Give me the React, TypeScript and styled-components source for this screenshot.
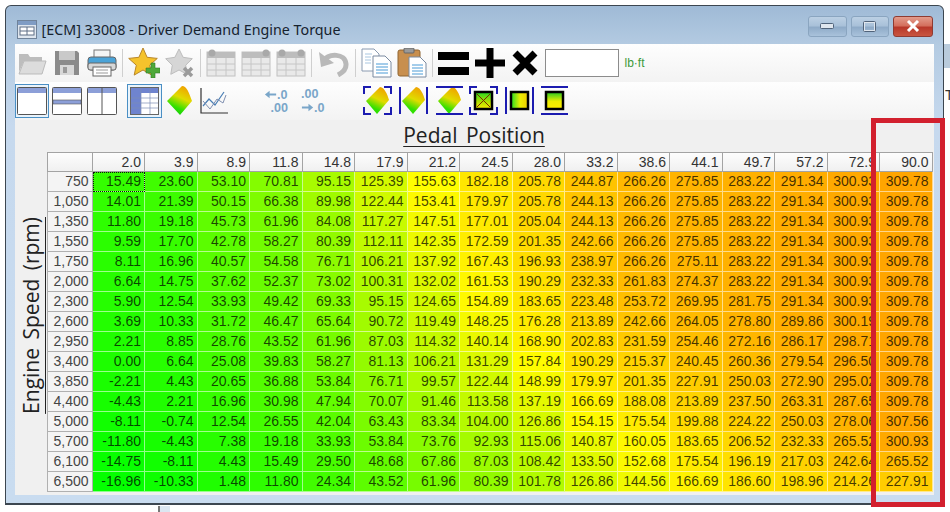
import { useId } from "react";
import styled, { createGlobalStyle } from "styled-components";

const GlobalStyle = createGlobalStyle`
  html, body {
    margin: 0;
    padding: 0;
    background: #fff;
  }
  #root {
    width: 950px;
    height: 512px;
    position: relative;
    overflow: hidden;
  }
`;

const Desktop = styled.div`
  width: 950px;
  height: 512px;
  padding: 5px 0 0 5px;
  box-sizing: border-box;
  background: #fff;
  position: relative;
  overflow: hidden;
`;

const BehindRight = styled.div`
  position: absolute;
  left: 944px;
  top: 44px;
  width: 6px;
  height: 24px;
  background: #b9cbdc;
`;

const BehindLetter = styled.div`
  position: absolute;
  left: 945px;
  top: 87px;
  font: 14px "Liberation Sans", sans-serif;
  color: #333;
`;

const BehindTab = styled.div`
  position: absolute;
  left: 158px;
  top: 506px;
  width: 12px;
  height: 6px;
  background: #dbe6f1;
  border-left: 2px solid #777;
  box-sizing: border-box;
`;

const Window = styled.div`
  width: 939px;
  height: 500px;
  box-sizing: border-box;
  border: 1.5px solid #3c4650;
  border-bottom-width: 2px;
  border-radius: 6px 6px 0 0;
  background: linear-gradient(180deg, #9fbad6 0, #b4cbe2 40px, #c6d9ee 120px, #c9dcf0 100%);
  display: flex;
  flex-direction: column;
  padding: 0 9.5px 8px 8.5px;
`;

const TitleBar = styled.div`
  height: 37.5px;
  flex: none;
  display: flex;
  align-items: center;
  padding: 10px 0 0 2px;
  box-sizing: border-box;
`;

const TitleText = styled.span`
  margin-left: 5px;
  font: 14.3px "Noto Sans", sans-serif;
  color: #16222e;
  white-space: nowrap;
`;

const Caption = styled.div`
  margin-left: auto;
  display: flex;
  gap: 4px;
  margin-top: -7px;
  margin-right: 1px;
`;

const CaptionButton = styled.div<{ $close?: boolean; $w: number }>`
  width: ${(p) => p.$w}px;
  height: 21px;
  box-sizing: border-box;
  border: 1px solid ${(p) => (p.$close ? "#8f3b32" : "#8aa5c0")};
  border-radius: 3px;
  display: flex;
  align-items: center;
  justify-content: center;
  background: ${(p) =>
    p.$close
      ? "linear-gradient(180deg, #e39c8d 0, #d4705e 45%, #b8382a 55%, #c9553f 100%)"
      : "linear-gradient(180deg, #bcd0e4 0, #a9c1d9 45%, #8fabc8 55%, #a9c2db 100%)"};
`;

const Client = styled.div`
  flex: 1;
  min-height: 0;
  background: #f0f0f0;
  display: flex;
  flex-direction: column;
`;

const ToolRow = styled.div<{ $h: number }>`
  height: ${(p) => p.$h}px;
  flex: none;
  display: flex;
  align-items: center;
  background: linear-gradient(180deg, #fefefe 0, #f3f3f3 100%);
`;

const Tool = styled.div<{ $w: number; $ml?: number; $on?: boolean }>`
  width: ${(p) => p.$w}px;
  height: ${(p) => (p.$on ? "34px" : "30px")};
  margin-left: ${(p) => p.$ml ?? 0}px;
  flex: none;
  box-sizing: border-box;
  display: flex;
  align-items: center;
  justify-content: center;
  border: ${(p) => (p.$on ? "1px solid #4a8fc4" : "none")};
  background: ${(p) => (p.$on ? "#e9f3fb" : "transparent")};
`;

const Sep = styled.div<{ $ml: number }>`
  width: 1px;
  height: 28px;
  margin-left: ${(p) => p.$ml}px;
  flex: none;
  background: #cfcfcf;
`;

const ValueInput = styled.div`
  width: 74px;
  height: 28px;
  margin-left: 5px;
  flex: none;
  box-sizing: border-box;
  background: #fff;
  border: 1px solid #8c8c8c;
`;

const Units = styled.span`
  margin-left: 6px;
  font: 12px "Liberation Sans", sans-serif;
  color: #3c9a3c;
`;

const AxisTitle = styled.div`
  height: 32px;
  flex: none;
  text-align: center;
  font: 21px "Open Sans", sans-serif;
  color: #222;
  text-decoration: underline;
  text-underline-offset: 3px;
  text-decoration-thickness: 1px;
  word-spacing: 3px;
  line-height: 30px;
  padding-right: 0;
`;

const TableArea = styled.div`
  flex: 1;
  min-height: 0;
  display: flex;
`;

const SideLabel = styled.div`
  width: 32px;
  flex: none;
  box-sizing: border-box;
  display: flex;
  align-items: flex-end;
  justify-content: center;
  padding-bottom: 81px;
`;

const SideText = styled.span`
  writing-mode: vertical-rl;
  transform: rotate(180deg);
  font: 21px "Open Sans", sans-serif;
  color: #222;
  white-space: nowrap;
  text-decoration: underline;
  text-underline-offset: 3px;
  text-decoration-thickness: 1px;
  word-spacing: 3px;
`;

const Grid = styled.div`
  width: 886px;
  display: grid;
  grid-template-columns: 46px repeat(16, 52.5px);
  grid-auto-rows: 20px;
  font: 14px "Liberation Sans", sans-serif;
`;

const HeadCell = styled.div`
  box-sizing: border-box;
  border: 1px solid #a3a3a3;
  border-left-width: 0;
  background: linear-gradient(180deg, #fdfdfd 0, #f0f0f0 100%);
  color: #333;
  text-align: right;
  padding-right: 3px;
  line-height: 19px;
`;

const RowHead = styled.div`
  box-sizing: border-box;
  border: 1px solid #b0b0b0;
  border-top-width: 0;
  background: #f4f4f4;
  color: #444;
  text-align: right;
  padding-right: 3px;
  line-height: 19px;
`;

const Cell = styled.div<{ $active?: boolean }>`
  box-sizing: border-box;
  border-right: 1px solid rgba(255, 255, 255, 0.55);
  border-bottom: 1px solid rgba(255, 255, 255, 0.55);
  outline: ${(p) => (p.$active ? "1px dotted #111" : "none")};
  outline-offset: -1px;
  color: rgba(0, 0, 0, 0.74);
  text-align: right;
  padding-right: 3px;
  line-height: 19px;
`;

const RedBox = styled.div`
  position: absolute;
  left: 871px;
  top: 118px;
  width: 74px;
  height: 389px;
  box-sizing: border-box;
  border: 5.5px solid #d2202e;
`;

const pedal = ["2.0", "3.9", "8.9", "11.8", "14.8", "17.9", "21.2", "24.5", "28.0", "33.2", "38.6", "44.1", "49.7", "57.2", "72.9", "90.0"];

const rows: [string, number[]][] = [
  ["750", [15.49, 23.6, 53.1, 70.81, 95.15, 125.39, 155.63, 182.18, 205.78, 244.87, 266.26, 275.85, 283.22, 291.34, 300.93, 309.78]],
  ["1,050", [14.01, 21.39, 50.15, 66.38, 89.98, 122.44, 153.41, 179.97, 205.78, 244.13, 266.26, 275.85, 283.22, 291.34, 300.93, 309.78]],
  ["1,350", [11.8, 19.18, 45.73, 61.96, 84.08, 117.27, 147.51, 177.01, 205.04, 244.13, 266.26, 275.85, 283.22, 291.34, 300.93, 309.78]],
  ["1,550", [9.59, 17.7, 42.78, 58.27, 80.39, 112.11, 142.35, 172.59, 201.35, 242.66, 266.26, 275.85, 283.22, 291.34, 300.93, 309.78]],
  ["1,750", [8.11, 16.96, 40.57, 54.58, 76.71, 106.21, 137.92, 167.43, 196.93, 238.97, 266.26, 275.11, 283.22, 291.34, 300.93, 309.78]],
  ["2,000", [6.64, 14.75, 37.62, 52.37, 73.02, 100.31, 132.02, 161.53, 190.29, 232.33, 261.83, 274.37, 283.22, 291.34, 300.93, 309.78]],
  ["2,300", [5.9, 12.54, 33.93, 49.42, 69.33, 95.15, 124.65, 154.89, 183.65, 223.48, 253.72, 269.95, 281.75, 291.34, 300.93, 309.78]],
  ["2,600", [3.69, 10.33, 31.72, 46.47, 65.64, 90.72, 119.49, 148.25, 176.28, 213.89, 242.66, 264.05, 278.8, 289.86, 300.19, 309.78]],
  ["2,950", [2.21, 8.85, 28.76, 43.52, 61.96, 87.03, 114.32, 140.14, 168.9, 202.83, 231.59, 254.46, 272.16, 286.17, 298.71, 309.78]],
  ["3,400", [0, 6.64, 25.08, 39.83, 58.27, 81.13, 106.21, 131.29, 157.84, 190.29, 215.37, 240.45, 260.36, 279.54, 296.5, 309.78]],
  ["3,850", [-2.21, 4.43, 20.65, 36.88, 53.84, 76.71, 99.57, 122.44, 148.99, 179.97, 201.35, 227.91, 250.03, 272.9, 295.02, 309.78]],
  ["4,400", [-4.43, 2.21, 16.96, 30.98, 47.94, 70.07, 91.46, 113.58, 137.19, 166.69, 188.08, 213.89, 237.5, 263.31, 287.65, 309.78]],
  ["5,000", [-8.11, -0.74, 12.54, 26.55, 42.04, 63.43, 83.34, 104, 126.86, 154.15, 175.54, 199.88, 224.22, 250.03, 278.06, 307.56]],
  ["5,700", [-11.8, -4.43, 7.38, 19.18, 33.93, 53.84, 73.76, 92.93, 115.06, 140.87, 160.05, 183.65, 206.52, 232.33, 265.52, 300.93]],
  ["6,100", [-14.75, -8.11, 4.43, 15.49, 29.5, 48.68, 67.86, 87.03, 108.42, 133.5, 152.68, 175.54, 196.19, 217.03, 242.64, 265.52]],
  ["6,500", [-16.96, -10.33, 1.48, 11.8, 24.34, 43.52, 61.96, 80.39, 101.78, 126.86, 144.56, 166.69, 186.6, 198.96, 214.26, 227.91]],
];

// green -> yellow at 155, then yellow -> orange at the top of the map
const heat = (v: number) => {
  if (v <= 155) {
    const r = Math.max(0, Math.round(((v + 20) / 175) * 255));
    return `rgb(${r},${255 - Math.round(r / 40)},0)`;
  }
  const t = Math.min(1, (v - 155) / 155);
  return `rgb(255,${Math.round(255 - 90 * Math.pow(t, 0.75))},0)`;
};

const fmt = (v: number) => v.toFixed(2);

const star = (cx: number, cy: number, R: number, r: number) =>
  Array.from({ length: 10 }, (_, i) => {
    const a = (Math.PI / 5) * i - Math.PI / 2;
    const d = i % 2 ? r : R;
    return `${(cx + d * Math.cos(a)).toFixed(1)},${(cy + d * Math.sin(a)).toFixed(1)}`;
  }).join(" ");

const Folder = () => (
  <svg width="30" height="26" viewBox="0 0 30 26">
    <path d="M2 4h9l2 3h12v4H7L2 22z" fill="#bdbdbd" />
    <path d="M7 11h22l-4 13H2z" fill="#dcdcdc" stroke="#bbb" />
  </svg>
);

const Floppy = () => (
  <svg width="26" height="26" viewBox="0 0 26 26">
    <path d="M1 1h22l2 2v22H1z" fill="#8b8b8b" />
    <rect x="5" y="1" width="16" height="9" fill="#c9c9c9" />
    <rect x="6" y="15" width="14" height="10" fill="#d8d8d8" />
    <rect x="9" y="17" width="4" height="6" fill="#9a9a9a" />
  </svg>
);

const Printer = () => (
  <svg width="30" height="28" viewBox="0 0 30 28">
    <rect x="7" y="1" width="16" height="9" fill="#f4f4f4" stroke="#777" />
    <rect x="1" y="8" width="28" height="13" rx="3" fill="#4aa3d8" stroke="#666" />
    <rect x="1" y="14" width="28" height="7" rx="2" fill="#d7d7d7" stroke="#666" />
    <rect x="6" y="18" width="18" height="9" fill="#fff" stroke="#666" />
    <path d="M9 21h12M9 24h12" stroke="#999" />
  </svg>
);

const StarAdd = () => (
  <svg width="32" height="30" viewBox="0 0 32 30">
    <polygon points={star(15, 15, 15, 7)} fill="#f5c32c" stroke="#b8862a" strokeLinejoin="round" />
    <path d="M23 15v5h-5v5h5v5h4v-5h5v-5h-5v-5z" fill="#4ea93a" stroke="#2f7d2a" strokeWidth="0.6" />
  </svg>
);

const StarOff = () => (
  <svg width="30" height="30" viewBox="0 0 30 30">
    <polygon points={star(14, 15, 14, 7)} fill="#d6d6d6" stroke="#bdbdbd" strokeLinejoin="round" />
    <path d="M19 20l8 8M27 20l-8 8" stroke="#9b9b9b" strokeWidth="3.5" />
  </svg>
);

const GridOff = ({ gears }: { gears: "l" | "r" | "both" }) => (
  <svg width="30" height="28" viewBox="0 0 30 28">
    <rect x="1" y="3" width="28" height="24" fill="#e9e9e9" stroke="#c0c0c0" />
    <rect x="1" y="3" width="28" height="6" fill="#bdbdbd" />
    <path d="M10 9v18M20 9v18M1 15h28M1 21h28" stroke="#c6c6c6" />
    {gears !== "r" && <circle cx="6" cy="4" r="3.5" fill="#a9a9a9" />}
    {gears !== "l" && <circle cx="25" cy="4" r="3.5" fill="#a9a9a9" />}
  </svg>
);

const Undo = () => (
  <svg width="31" height="28" viewBox="0 0 31 28">
    <path d="M5 12c6-8 22-8 23 3 .5 6-4 9-8 11" fill="none" stroke="#b9b9b9" strokeWidth="5" />
    <path d="M1 3l2 15 13-4z" fill="#b9b9b9" />
  </svg>
);

const Copy = () => (
  <svg width="31" height="30" viewBox="0 0 31 30">
    <path d="M1 1h12l5 5v17H1z" fill="#fff" stroke="#8a9ab0" />
    <path d="M12 8h12l6 6v15H12z" fill="#fff" stroke="#7a8aa0" />
    <path d="M15 16h12M15 19h12M15 22h12M15 25h12" stroke="#4a9bd6" />
    <path d="M4 6h7M4 9h6M4 12h6M4 15h6" stroke="#a9c6e0" />
  </svg>
);

const Paste = () => (
  <svg width="30" height="30" viewBox="0 0 30 30">
    <rect x="1" y="2" width="22" height="26" rx="2" fill="#c88f4e" stroke="#8f6530" />
    <rect x="7" y="0" width="10" height="5" rx="1" fill="#9a9a9a" stroke="#666" />
    <path d="M12 9h11l6 6v14H12z" fill="#fff" stroke="#7a8aa0" />
    <path d="M15 17h11M15 20h11M15 23h11M15 26h11" stroke="#4a9bd6" />
  </svg>
);

const Equals = () => (
  <svg width="32" height="26" viewBox="0 0 32 26">
    <rect x="0" y="2" width="31" height="8" fill="#000" />
    <rect x="0" y="17" width="31" height="8" fill="#000" />
  </svg>
);

const Plus = () => (
  <svg width="30" height="30" viewBox="0 0 30 30">
    <path d="M11.5 0h7v11.5H30v7H18.500V30h-7V18.500H0v-7h11.500z" fill="#000" />
  </svg>
);

const Times = () => (
  <svg width="26" height="26" viewBox="0 0 26 26">
    <path d="M3 3l20 20M23 3L3 23" stroke="#000" strokeWidth="7" />
  </svg>
);

const Pane = ({ kind }: { kind: "single" | "rows" | "cols" }) => (
  <svg width="30" height="28" viewBox="0 0 30 28">
    <rect x="0.500" y="0.500" width="29" height="27" rx="1" fill="#fff" stroke="#555" />
    <rect x="1" y="1" width="28" height="5" fill="#8c9fd8" />
    {kind === "rows" && <rect x="1" y="13" width="28" height="4" fill="#8c9fd8" stroke="#555" strokeWidth="0.600" />}
    {kind === "cols" && <path d="M15 1v26" stroke="#555" />}
  </svg>
);

const TableIcon = () => (
  <svg width="29" height="28" viewBox="0 0 29 28">
    <rect x="0.500" y="0.500" width="28" height="27" fill="#fff" stroke="#666" />
    <rect x="1" y="1" width="27" height="5" fill="#6f84cf" />
    <rect x="1" y="1" width="10" height="26" fill="#6f84cf" />
    <path d="M1 11h27M1 16h27M1 21h27M11 1v26M20 1v26" stroke="#7d8db5" strokeWidth="0.700" />
  </svg>
);

const Surface = ({ w = 26, h = 29 }: { w?: number; h?: number }) => {
  const id = useId();
  return (
    <svg width={w} height={h} viewBox="0 0 26 29">
      <defs>
        <linearGradient id={id} x1="0.700" y1="0" x2="0.300" y2="1">
          <stop offset="0" stopColor="#f0a000" />
          <stop offset="0.400" stopColor="#e0dc00" />
          <stop offset="0.750" stopColor="#30e000" />
          <stop offset="1" stopColor="#10c810" />
        </linearGradient>
      </defs>
      <path d="M15 0c5 0 7 7 10 15L13 29 0 15z" fill={`url(#${id})`} />
    </svg>
  );
};

const Chart = () => (
  <svg width="28" height="28" viewBox="0 0 28 28">
    <path d="M1 1v25h27" fill="none" stroke="#333" strokeWidth="1.200" />
    <path d="M3 19l6-7 6 6 9-13" fill="none" stroke="#4a7fb5" strokeWidth="1.200" />
    <path d="M3 14l7 8 7-10 6 4 3-8" fill="none" stroke="#7f8fb0" strokeWidth="1" />
  </svg>
);

const DecimalLabel = styled.text`
  font: bold 13.500px "Liberation Sans", sans-serif;
  fill: #7aa6c9;
`;

const Decimals = ({ more }: { more?: boolean }) => (
  <svg width="30" height="30" viewBox="0 0 30 30">
    {more ? (
      <>
        <DecimalLabel x="0" y="12">.00</DecimalLabel>
        <polygon points="1,21 8,21 8,18 13,22 8,26 8,23 1,23" fill="#7aa6c9" />
        <DecimalLabel x="14" y="27">.0</DecimalLabel>
      </>
    ) : (
      <>
        <polygon points="13,7 6,7 6,4 1,8 6,12 6,9 13,9" fill="#7aa6c9" />
        <DecimalLabel x="14" y="13">.0</DecimalLabel>
        <DecimalLabel x="7" y="27">.00</DecimalLabel>
      </>
    )}
  </svg>
);

type Frame = "corners" | "sides" | "bars";

const Marks = ({ frame }: { frame: Frame }) => {
  const c = "#1c1cb0";
  if (frame === "corners")
    return (
      <path
        d="M1 8V1h7M21 1h7v7M28 21v7h-7M8 28H1v-7"
        fill="none"
        stroke={c}
        strokeWidth="2"
      />
    );
  if (frame === "sides")
    return <path d="M1 1v27M28 1v27" fill="none" stroke={c} strokeWidth="2" />;
  return <path d="M1 1h27M1 28h27" fill="none" stroke={c} strokeWidth="2" />;
};

const SurfaceFit = ({ frame }: { frame: Frame }) => {
  const id = useId();
  return (
    <svg width="29" height="29" viewBox="0 0 29 29">
      <defs>
        <linearGradient id={id} x1="0.700" y1="0" x2="0.300" y2="1">
          <stop offset="0" stopColor="#f0a000" />
          <stop offset="0.450" stopColor="#e0dc00" />
          <stop offset="0.800" stopColor="#30e000" />
        </linearGradient>
      </defs>
      <path d="M17 1c5 1 7 7 9 13L14 28 3 15z" fill={`url(#${id})`} />
      <Marks frame={frame} />
    </svg>
  );
};

const BoxFit = ({ frame, dir }: { frame: Frame; dir: "x" | "y" | "cross" }) => {
  const id = useId();
  return (
    <svg width="29" height="29" viewBox="0 0 29 29">
      <defs>
        <linearGradient id={id} x1="0" y1="0" x2={dir === "x" ? "1" : "0"} y2={dir === "x" ? "0" : "1"}>
          <stop offset="0" stopColor={dir === "y" ? "#22c822" : "#22dd22"} />
          <stop offset="0.550" stopColor={dir === "cross" ? "#aadd00" : "#eeee00"} />
          <stop offset="1" stopColor={dir === "x" ? "#eecc00" : "#ffee00"} />
        </linearGradient>
      </defs>
      <rect x="6" y="6" width="17" height="17" fill={`url(#${id})`} stroke="#000" strokeWidth="2.500" />
      {dir === "cross" && <path d="M8 8l13 13M21 8L8 21" stroke="#7a2a00" strokeWidth="1" />}
      <Marks frame={frame} />
    </svg>
  );
};

const WinGlyph = () => (
  <svg width="20" height="19" viewBox="0 0 20 19">
    <rect x="0.500" y="0.500" width="19" height="18" fill="#dfe6ee" stroke="#70839a" />
    <rect x="1" y="1" width="18" height="4" fill="#7f9cc4" />
    <rect x="3" y="7" width="14" height="8" fill="#fff" stroke="#5e6f86" />
    <path d="M10 7v8M3 11h14" stroke="#5e6f86" />
  </svg>
);

export default function App() {
  return (
    <Desktop>
      <GlobalStyle />
      <BehindRight />
      <BehindLetter>T</BehindLetter>
      <BehindTab />
      <Window>
        <TitleBar>
          <WinGlyph />
          <TitleText>[ECM] 33008 - Driver Demand Engine Torque</TitleText>
          <Caption>
            <CaptionButton $w={39}>
              <svg width="14" height="6" viewBox="0 0 14 6">
                <rect x="0.500" y="0.500" width="13" height="5" rx="1" fill="#dfe6ee" stroke="#50637a" />
              </svg>
            </CaptionButton>
            <CaptionButton $w={38}>
              <svg width="13" height="11" viewBox="0 0 13 11">
                <rect x="1" y="1" width="11" height="9" rx="1" fill="none" stroke="#dfe6ee" strokeWidth="2" />
                <rect x="0.500" y="0.500" width="12" height="10" rx="1" fill="none" stroke="#50637a" />
              </svg>
            </CaptionButton>
            <CaptionButton $w={40} $close>
              <svg width="14" height="12" viewBox="0 0 14 12">
                <path d="M2 1l10 10M12 1L2 11" stroke="#fff" strokeWidth="3" />
              </svg>
            </CaptionButton>
          </Caption>
        </TitleBar>
        <Client>
          <ToolRow $h={38}>
            <Tool $w={30} $ml={2}><Folder /></Tool>
            <Tool $w={30} $ml={5}><Floppy /></Tool>
            <Tool $w={30} $ml={5}><Printer /></Tool>
            <Sep $ml={5} />
            <Tool $w={32} $ml={5}><StarAdd /></Tool>
            <Tool $w={30} $ml={5}><StarOff /></Tool>
            <Sep $ml={5} />
            <Tool $w={30} $ml={5}><GridOff gears="l" /></Tool>
            <Tool $w={30} $ml={5}><GridOff gears="r" /></Tool>
            <Tool $w={30} $ml={5}><GridOff gears="both" /></Tool>
            <Sep $ml={5} />
            <Tool $w={33} $ml={5}><Undo /></Tool>
            <Sep $ml={5} />
            <Tool $w={31} $ml={5}><Copy /></Tool>
            <Tool $w={30} $ml={5}><Paste /></Tool>
            <Sep $ml={5} />
            <Tool $w={32} $ml={5}><Equals /></Tool>
            <Tool $w={30} $ml={5}><Plus /></Tool>
            <Tool $w={30} $ml={5}><Times /></Tool>
            <ValueInput />
            <Units>lb·ft</Units>
          </ToolRow>
          <ToolRow $h={38}>
            <Tool $w={34} $on><Pane kind="single" /></Tool>
            <Tool $w={30} $ml={3}><Pane kind="rows" /></Tool>
            <Tool $w={30} $ml={5}><Pane kind="cols" /></Tool>
            <Tool $w={35} $ml={10} $on><TableIcon /></Tool>
            <Tool $w={27} $ml={5}><Surface /></Tool>
            <Tool $w={28} $ml={6}><Chart /></Tool>
            <Tool $w={28} $ml={36}><Decimals /></Tool>
            <Tool $w={28} $ml={9}><Decimals more /></Tool>
            <Tool $w={29} $ml={34}><SurfaceFit frame="corners" /></Tool>
            <Tool $w={29} $ml={7}><SurfaceFit frame="sides" /></Tool>
            <Tool $w={29} $ml={7}><SurfaceFit frame="bars" /></Tool>
            <Tool $w={29} $ml={5}><BoxFit frame="corners" dir="cross" /></Tool>
            <Tool $w={29} $ml={7}><BoxFit frame="sides" dir="x" /></Tool>
            <Tool $w={29} $ml={6}><BoxFit frame="bars" dir="y" /></Tool>
          </ToolRow>
          <AxisTitle>Pedal Position</AxisTitle>
          <TableArea>
            <SideLabel>
              <SideText>Engine Speed (rpm)</SideText>
            </SideLabel>
            <Grid>
              <HeadCell style={{ borderLeftWidth: 1 }} />
              {pedal.map((p) => (
                <HeadCell key={p}>{p}</HeadCell>
              ))}
              {rows.map(([rpm, vals], r) => (
                <>
                  <RowHead key={rpm}>{rpm}</RowHead>
                  {vals.map((v, c) => (
                    <Cell key={`${rpm}-${c}`} $active={r === 0 && c === 0} style={{ background: heat(v) }}>
                      {fmt(v)}
                    </Cell>
                  ))}
                </>
              ))}
            </Grid>
          </TableArea>
        </Client>
      </Window>
      <RedBox />
    </Desktop>
  );
}
